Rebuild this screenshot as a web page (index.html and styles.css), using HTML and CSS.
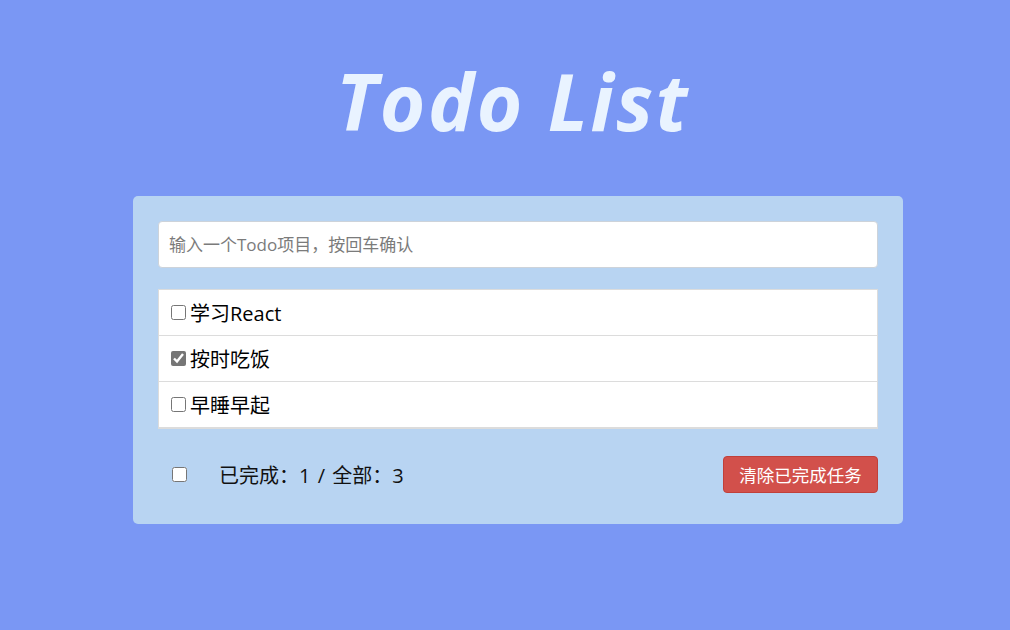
FILE: index.html
```html
<!DOCTYPE html>
<html lang="zh">
<head>
<meta charset="utf-8">
<title>Todo List</title>
<link rel="stylesheet" href="styles.css">
</head>
<body>
<h1 class="title">Todo List</h1>
<div class="card">
  <input class="new-todo" type="text" placeholder="输入一个Todo项目，按回车确认">
  <ul class="list">
    <li class="item"><label><input type="checkbox"><span>学习React</span></label></li>
    <li class="item"><label><input type="checkbox" checked><span>按时吃饭</span></label></li>
    <li class="item"><label><input type="checkbox"><span>早睡早起</span></label></li>
  </ul>
  <div class="footer">
    <input class="all" type="checkbox">
    <span class="count">已完成：1 / 全部：3</span>
    <button class="clear">清除已完成任务</button>
  </div>
</div>
</body>
</html>
```
FILE: styles.css
```css
html, body {
  margin: 0;
  padding: 0;
}
body {
  background: #7a97f4;
  width: 1010px;
  height: 630px;
  overflow: hidden;
  font-family: "Open Sans", "Noto Sans CJK SC", sans-serif;
}
.title {
  margin: 0;
  padding-top: 53px;
  height: 196px;
  box-sizing: border-box;
  text-align: center;
  padding-left: 16px;
  font-family: "Open Sans", sans-serif;
  font-style: italic;
  font-weight: 700;
  font-size: 78px;
  letter-spacing: 2.5px;
  line-height: 96px;
  color: #e9f3ff;
}
.card {
  margin-left: 133px;
  width: 770px;
  box-sizing: border-box;
  background: #b8d4f2;
  border-radius: 5px;
  padding: 25px 25px 31px;
}
.new-todo {
  display: block;
  width: 100%;
  box-sizing: border-box;
  height: 47px;
  border: 1px solid #cdd3da;
  border-radius: 4px;
  padding: 0 10px;
  font-family: "Open Sans", "Noto Sans CJK SC", sans-serif;
  font-size: 17px;
  color: #333;
  outline: none;
  background: #fff;
}
.new-todo::placeholder {
  color: #7b7b7b;
}
.list {
  list-style: none;
  margin: 21px 0 0;
  padding: 0;
  background: #fff;
  border: 1px solid #dcdcdc;
  border-bottom-width: 2px;
}
.item {
  height: 45px;
  border-top: 1px solid #dcdcdc;
  display: flex;
  align-items: center;
  padding-left: 8px;
}
.item:first-child {
  border-top: none;
}
.item label {
  display: flex;
  align-items: center;
  font-size: 20px;
  color: #000;
}
.item input {
  margin: 0 4px 0 4px;
  width: 15px;
  height: 15px;
  accent-color: #767676;
}
.footer {
  margin-top: 27px;
  height: 37px;
  display: flex;
  align-items: center;
}
.all {
  margin: 0 0 0 14px;
  width: 15px;
  height: 15px;
}
.count {
  margin-left: 32px;
  font-size: 20px;
  word-spacing: 2px;
  color: #111;
}
.clear {
  margin-left: auto;
  width: 155px;
  height: 37px;
  background: #d2504b;
  border: 1px solid #c0403b;
  border-radius: 4px;
  color: #fff;
  font-family: "Open Sans", "Noto Sans CJK SC", sans-serif;
  font-size: 17.5px;
  padding: 0;
}
```
